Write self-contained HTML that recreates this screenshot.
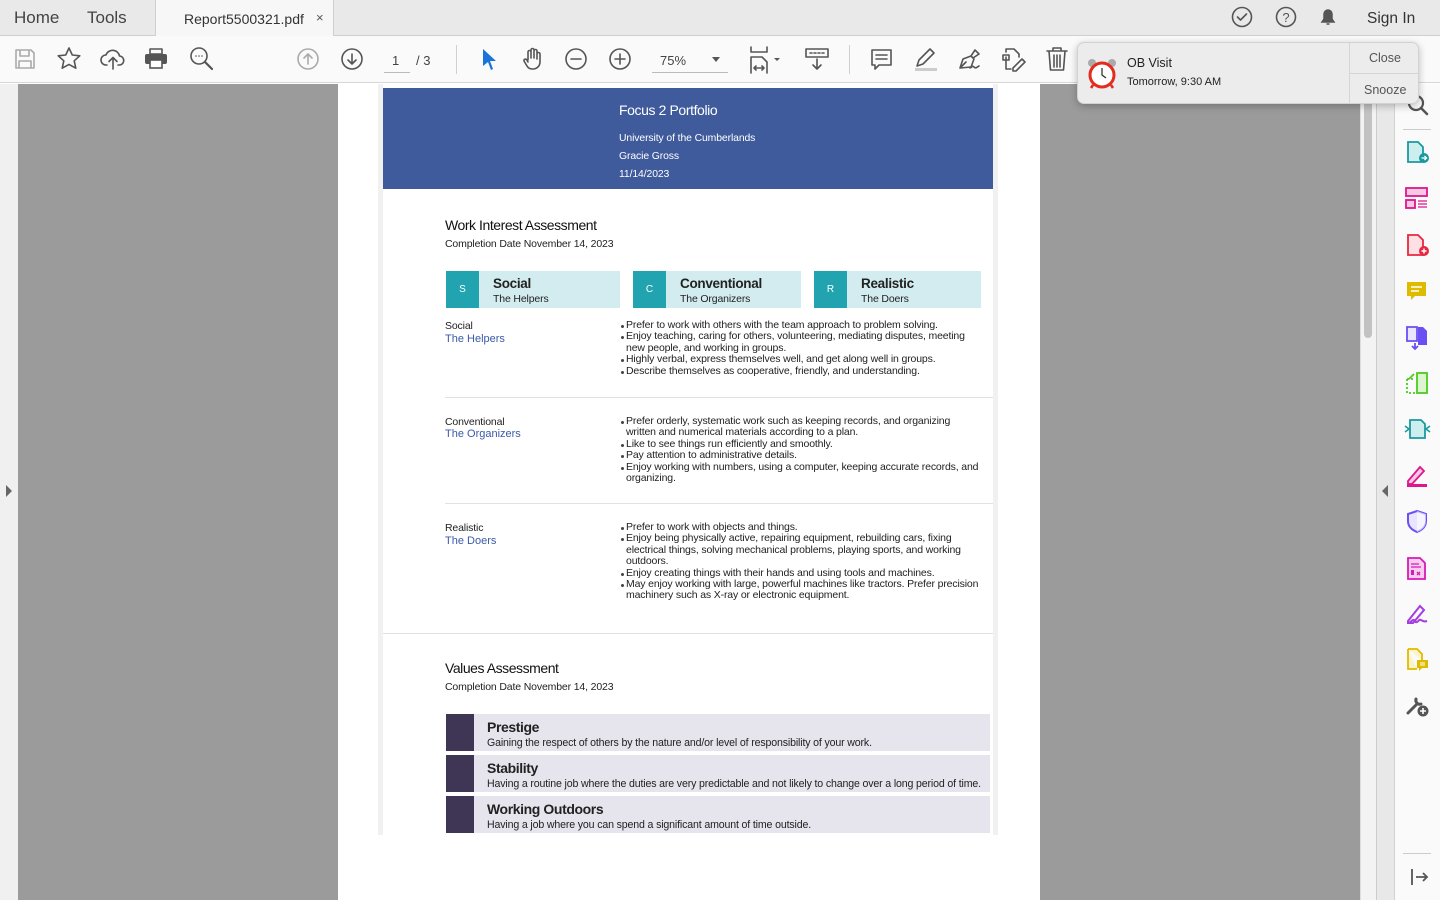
<!DOCTYPE html>
<html><head><meta charset="utf-8"><style>
*{margin:0;padding:0;box-sizing:border-box}
body{width:1440px;height:900px;overflow:hidden;font-family:"Liberation Sans",Arial,sans-serif;background:#fff;position:relative;color:#222}
.a{position:absolute}
.t{position:absolute;white-space:nowrap}
svg{position:absolute;overflow:visible}
.ic{fill:none;stroke:#555;stroke-width:1.6;stroke-linecap:round;stroke-linejoin:round}
.pg{font-size:10.5px;letter-spacing:-0.15px;color:#222}
.bl{font-size:10.5px;line-height:11.4px;letter-spacing:-0.15px;color:#222;white-space:nowrap}
.bl div{padding-left:6px;position:relative}
.bl div:before{content:"";position:absolute;left:1px;top:5px;width:3px;height:3px;background:#444;border-radius:50%}
.lnk{color:#3a5aa8;font-size:11px}
.card{position:absolute;height:37px;background:#d3ecef}
.card .sq{position:absolute;left:0;top:0;width:33px;height:37px;background:#22a4b0;color:#fff;font-size:10px;text-align:center;line-height:37px}
.card b{position:absolute;left:47px;top:5px;font-size:13.5px;letter-spacing:-0.3px}
.card span{position:absolute;left:47px;top:22px;font-size:10.5px;letter-spacing:-0.15px}
.val{position:absolute;left:446px;width:544px;height:37px;background:#e6e5ee}
.val i{position:absolute;left:0;top:0;width:28px;height:37px;background:#3f3656}
.val b{position:absolute;left:41px;top:5px;font-size:14px;letter-spacing:-0.4px;font-style:normal}
.val span{position:absolute;left:41px;top:23px;font-size:10.6px;letter-spacing:-0.15px}
</style></head><body>
<div class="a" style="left:0;top:0;width:1440px;height:36px;background:#e9e9e9;border-bottom:1px solid #cfcfcf"></div>
<div class="a" style="left:155px;top:0;width:179px;height:36px;background:#f7f7f7;border-left:1px solid #cfcfcf;border-right:1px solid #cfcfcf"></div>
<div class="t" style="left:14px;top:8px;font-size:17px;color:#444">Home</div>
<div class="t" style="left:87px;top:8px;font-size:17px;color:#444">Tools</div>
<div class="t" style="left:184px;top:11px;font-size:14px;color:#333">Report5500321.pdf</div>
<div class="t" style="left:316px;top:10px;font-size:13px;color:#555">×</div>
<svg width="24" height="24" style="left:1230px;top:5px"><circle cx="12" cy="12" r="9.5" class="ic"/><path d="M7.5 12l3 3 6-6" class="ic"/></svg>
<svg width="24" height="24" style="left:1274px;top:5px"><circle cx="12" cy="12" r="9.5" class="ic"/><text x="12" y="17" text-anchor="middle" font-size="13" fill="#555" font-family="Liberation Sans">?</text></svg>
<svg width="24" height="24" style="left:1316px;top:5px"><path d="M6 17h12l-2-3v-5a4 4 0 0 0-8 0v5z M10.5 19h3" fill="#555" stroke="#555" stroke-width="1.5"/></svg>
<div class="t" style="left:1367px;top:10px;font-size:15.5px;color:#333">Sign In</div>

<div class="a" style="left:0;top:36px;width:1440px;height:47px;background:#fafafa;border-bottom:1px solid #d6d6d6"></div>
<svg width="24" height="24" style="left:13px;top:47px"><path d="M3 3h15l3 3v15H3z M7 3v6h9V3 M6 21v-7h12v7" class="ic" style="stroke:#aaa"/></svg>
<svg width="26" height="26" style="left:56px;top:46px"><path d="M13 2l3.3 7 7.5.8-5.6 5 1.6 7.4L13 18.4l-6.8 3.8 1.6-7.4-5.6-5 7.5-.8z" class="ic"/></svg>
<svg width="26" height="26" style="left:100px;top:46px"><path d="M7 19H6a5 5 0 0 1 0-10 7 7 0 0 1 13.5 1A4.5 4.5 0 0 1 19 19h-1 M13 23V12 M9 15.5l4-4 4 4" class="ic"/></svg>
<svg width="26" height="26" style="left:143px;top:46px"><path d="M7 3h12v5H7z" class="ic"/><rect x="2" y="8" width="22" height="10" rx="2" fill="#555"/><rect x="7" y="14" width="12" height="8" fill="#fff" stroke="#555" stroke-width="1.6"/></svg>
<svg width="26" height="26" style="left:189px;top:46px"><circle cx="10" cy="10" r="8" class="ic"/><path d="M16 16l7 7" class="ic" style="stroke-width:2.2"/><circle cx="7" cy="10" r=".8" fill="#555"/><circle cx="10" cy="10" r=".8" fill="#555"/><circle cx="13" cy="10" r=".8" fill="#555"/></svg>
<svg width="24" height="24" style="left:296px;top:47px"><circle cx="12" cy="12" r="10" class="ic" style="stroke:#aaa"/><path d="M12 17V7 M8 11l4-4 4 4" class="ic" style="stroke:#aaa"/></svg>
<svg width="24" height="24" style="left:340px;top:47px"><circle cx="12" cy="12" r="10" class="ic"/><path d="M12 7v10 M8 13l4 4 4-4" class="ic"/></svg>
<div class="t" style="left:392px;top:53px;font-size:13px;color:#444">1</div>
<div class="a" style="left:384px;top:72px;width:26px;height:1px;background:#bbb"></div>
<div class="t" style="left:416px;top:53px;font-size:13px;color:#444">/ 3</div>
<div class="a" style="left:456px;top:45px;width:1px;height:29px;background:#d0d0d0"></div>
<svg width="20" height="24" style="left:480px;top:47px"><path d="M3 2l13 12h-6l3 8-2 1-3-8-5 4z" fill="#1a73d8"/></svg>
<svg width="26" height="26" style="left:520px;top:46px"><path d="M8 14V6a1.5 1.5 0 0 1 3 0v6V4a1.5 1.5 0 0 1 3 0v8V5a1.5 1.5 0 0 1 3 0v8V8a1.5 1.5 0 0 1 3 0v8a7 7 0 0 1-7 7h-1a6 6 0 0 1-5-3l-3-5a1.5 1.5 0 0 1 2.5-1.5L8 16" class="ic"/></svg>
<svg width="24" height="24" style="left:564px;top:47px"><circle cx="12" cy="12" r="10" class="ic"/><path d="M7 12h10" class="ic"/></svg>
<svg width="24" height="24" style="left:608px;top:47px"><circle cx="12" cy="12" r="10" class="ic"/><path d="M7 12h10 M12 7v10" class="ic"/></svg>
<div class="t" style="left:660px;top:53px;font-size:13px;color:#444">75%</div>
<div class="a" style="left:652px;top:72px;width:76px;height:1px;background:#bbb"></div>
<svg width="10" height="6" style="left:712px;top:57px"><path d="M0 0h8l-4 5z" fill="#555"/></svg>
<svg width="34" height="28" style="left:748px;top:45px"><path d="M3 2v5h16V2 M3 28V12h11l5 5v11 M6 23h10 M6 23l2-2M6 23l2 2M16 23l-2-2M16 23l-2 2" class="ic"/><path d="M26 13h6l-3 3z" fill="#555"/></svg>
<svg width="26" height="26" style="left:804px;top:46px"><rect x="2" y="3" width="22" height="8" class="ic"/><path d="M6 7h2M10 7h2M14 7h2M18 7h2 M13 13v10 M9 19l4 4 4-4" class="ic"/></svg>
<div class="a" style="left:849px;top:45px;width:1px;height:29px;background:#d0d0d0"></div>
<svg width="26" height="26" style="left:869px;top:47px"><path d="M3 3h19v15H10l-4 4v-4H3z M7 8h11 M7 12h11" class="ic"/></svg>
<svg width="26" height="26" style="left:912px;top:46px"><path d="M5 20l2-6L18 3l4 4-11 11z" class="ic"/><rect x="3" y="22" width="22" height="3" fill="#ccc"/></svg>
<svg width="26" height="26" style="left:956px;top:46px"><path d="M4 22l3-9 8-3 3 3-3 8z M4 22l6-6 M15 10l4-6 4 4-6 4 M14 22c2 0 2-3 4-1s3 0 5-1" class="ic"/></svg>
<svg width="26" height="26" style="left:1000px;top:46px"><path d="M6 6V3h8l5 5v3 M6 11v12h5 M3 9h6v5H3z M13 22l9-9 3 3-9 9h-3z" class="ic"/></svg>
<svg width="24" height="26" style="left:1045px;top:46px"><path d="M2 5h20 M8 5V2h8v3 M4 5l1.5 19h13L20 5 M9 9v12M12 9v12M15 9v12" class="ic"/></svg>

<div class="a" style="left:0;top:84px;width:18px;height:816px;background:#f0f0f0"></div>
<svg width="8" height="12" style="left:5px;top:485px"><path d="M1 0l6 6-6 6z" fill="#666"/></svg>
<div class="a" style="left:18px;top:84px;width:320px;height:816px;background:#9b9b9b"></div>
<div class="a" style="left:1040px;top:84px;width:320px;height:816px;background:#9b9b9b"></div>
<div class="a" style="left:338px;top:84px;width:702px;height:816px;background:#fff"></div>
<div class="a" style="left:1360px;top:84px;width:16px;height:816px;background:#f3f3f3;border-left:1px solid #ddd"></div>
<div class="a" style="left:1364px;top:90px;width:8px;height:248px;background:#c2c2c2;border-radius:4px"></div>
<div class="a" style="left:1376px;top:84px;width:19px;height:816px;background:#e8e8e8;border-left:1px solid #ccc;border-right:1px solid #d3d3d3"></div>
<svg width="8" height="12" style="left:1381px;top:485px"><path d="M7 0L1 6l6 6z" fill="#666"/></svg>
<div class="a" style="left:1395px;top:84px;width:45px;height:816px;background:#fafafa"></div>

<div class="a" style="left:378px;top:84px;width:620px;height:751px;background:#f1f1f1"></div>
<div class="a" style="left:383px;top:84px;width:610px;height:751px;background:#fff"></div>
<div class="a" style="left:383px;top:88px;width:610px;height:101px;background:#3f5b9c"></div>
<div class="t" style="left:619px;top:102px;font-size:14px;color:#fff;letter-spacing:-0.4px">Focus 2 Portfolio</div>
<div class="t" style="left:619px;top:133px;font-size:10.4px;color:#fff;letter-spacing:-0.1px">University of the Cumberlands</div>
<div class="t" style="left:619px;top:151px;font-size:10.4px;color:#fff;letter-spacing:-0.1px">Gracie Gross</div>
<div class="t" style="left:619px;top:169px;font-size:10.4px;color:#fff;letter-spacing:-0.1px">11/14/2023</div>

<div class="t" style="left:445px;top:217px;font-size:14px;letter-spacing:-0.45px;color:#111">Work Interest Assessment</div>
<div class="t pg" style="left:445px;top:238px">Completion Date November 14, 2023</div>

<div class="card" style="left:446px;top:271px;width:174px"><div class="sq">S</div><b>Social</b><span>The Helpers</span></div>
<div class="card" style="left:633px;top:271px;width:168px"><div class="sq">C</div><b>Conventional</b><span>The Organizers</span></div>
<div class="card" style="left:814px;top:271px;width:167px"><div class="sq">R</div><b>Realistic</b><span>The Doers</span></div>

<div class="t pg" style="left:445px;top:320px">Social</div>
<div class="t lnk" style="left:445px;top:333px">The Helpers</div>
<div class="a bl" style="left:620px;top:320px">
<div>Prefer to work with others with the team approach to problem solving.</div>
<div>Enjoy teaching, caring for others, volunteering, mediating disputes, meeting<br>new people, and working in groups.</div>
<div>Highly verbal, express themselves well, and get along well in groups.</div>
<div>Describe themselves as cooperative, friendly, and understanding.</div>
</div>
<div class="a" style="left:445px;top:397px;width:548px;height:1px;background:#e2e2e2"></div>

<div class="t pg" style="left:445px;top:416px">Conventional</div>
<div class="t lnk" style="left:445px;top:428px">The Organizers</div>
<div class="a bl" style="left:620px;top:416px">
<div>Prefer orderly, systematic work such as keeping records, and organizing<br>written and numerical materials according to a plan.</div>
<div>Like to see things run efficiently and smoothly.</div>
<div>Pay attention to administrative details.</div>
<div>Enjoy working with numbers, using a computer, keeping accurate records, and<br>organizing.</div>
</div>
<div class="a" style="left:445px;top:503px;width:548px;height:1px;background:#e2e2e2"></div>

<div class="t pg" style="left:445px;top:522px">Realistic</div>
<div class="t lnk" style="left:445px;top:535px">The Doers</div>
<div class="a bl" style="left:620px;top:522px">
<div>Prefer to work with objects and things.</div>
<div>Enjoy being physically active, repairing equipment, rebuilding cars, fixing<br>electrical things, solving mechanical problems, playing sports, and working<br>outdoors.</div>
<div>Enjoy creating things with their hands and using tools and machines.</div>
<div>May enjoy working with large, powerful machines like tractors. Prefer precision<br>machinery such as X-ray or electronic equipment.</div>
</div>
<div class="a" style="left:383px;top:633px;width:610px;height:1px;background:#e2e2e2"></div>

<div class="t" style="left:445px;top:660px;font-size:14px;letter-spacing:-0.45px;color:#111">Values Assessment</div>
<div class="t pg" style="left:445px;top:681px">Completion Date November 14, 2023</div>
<div class="val" style="top:714px"><i></i><b>Prestige</b><span>Gaining the respect of others by the nature and/or level of responsibility of your work.</span></div>
<div class="val" style="top:755px"><i></i><b>Stability</b><span>Having a routine job where the duties are very predictable and not likely to change over a long period of time.</span></div>
<div class="val" style="top:796px"><i></i><b>Working Outdoors</b><span>Having a job where you can spend a significant amount of time outside.</span></div>

<svg width="26" height="26" style="left:1405px;top:92px"><circle cx="11" cy="11" r="7" class="ic" style="stroke-width:2.2"/><path d="M16 16l6 6" class="ic" style="stroke-width:2.6"/></svg>
<div class="a" style="left:1403px;top:129px;width:28px;height:1px;background:#ccc"></div>
<svg width="26" height="26" style="left:1405px;top:140px"><path d="M3 2h10l5 5v15H3z" fill="#cdeeee" stroke="#1a9aa0" stroke-width="1.8"/><circle cx="19" cy="18" r="5" fill="#1a9aa0"/><path d="M16.5 18h5M19.5 16l2 2-2 2" stroke="#fff" stroke-width="1.3" fill="none"/></svg>
<svg width="26" height="26" style="left:1405px;top:187px"><rect x="1" y="1" width="21" height="8" fill="#f7c9e4" stroke="#e0168c" stroke-width="1.8"/><rect x="1" y="13" width="9" height="8" fill="#f7c9e4" stroke="#e0168c" stroke-width="1.8"/><path d="M13 14h9M13 17h9M13 20h9" stroke="#e0168c" stroke-width="1.3"/></svg>
<svg width="26" height="26" style="left:1405px;top:233px"><path d="M3 2h10l5 5v15H3z" fill="#fde0e4" stroke="#e8273f" stroke-width="1.8"/><circle cx="19" cy="18" r="5" fill="#e8273f"/><path d="M16.5 18h5M19 15.5v5" stroke="#fff" stroke-width="1.5"/></svg>
<svg width="26" height="26" style="left:1405px;top:280px"><path d="M2 2h19v14H10l-4 4v-4H2z" fill="#dfbb00"/><path d="M6 7h11M6 11h8" stroke="#fff" stroke-width="1.5"/></svg>
<svg width="26" height="26" style="left:1405px;top:325px"><path d="M2 2h10v14H2z" fill="#e9e4ff" stroke="#6a4ff2" stroke-width="1.8"/><path d="M13 2h5l4 4v14h-9z" fill="#6a4ff2"/><path d="M10 18v6M7 21l3 3 3-3" stroke="#6a4ff2" stroke-width="1.8" fill="none"/></svg>
<svg width="26" height="26" style="left:1405px;top:371px"><rect x="12" y="2" width="10" height="20" fill="#ddf5cf" stroke="#4ecb1e" stroke-width="1.8"/><path d="M2 8v14h8 M2 8h8" stroke="#4ecb1e" stroke-width="1.8" stroke-dasharray="2 2" fill="none"/><path d="M9 3L4 8" stroke="#4ecb1e" stroke-width="1.8"/></svg>
<svg width="26" height="26" style="left:1405px;top:417px"><path d="M5 3h11l4 4v14H5z" fill="#cdeeee" stroke="#1a9aa0" stroke-width="1.8"/><path d="M0 9l4 3-4 3M25 9l-4 3 4 3" stroke="#1a9aa0" stroke-width="1.6" fill="none"/></svg>
<svg width="26" height="26" style="left:1405px;top:463px"><path d="M3 18L15 4l4 4-12 13H3z" fill="#f7c9e4" stroke="#e0168c" stroke-width="1.8"/><rect x="2" y="21" width="20" height="3" fill="#e0168c"/></svg>
<svg width="26" height="26" style="left:1405px;top:509px"><path d="M12 2l9 3v7c0 6-4 9-9 11-5-2-9-5-9-11V5z" fill="#e9e4ff" stroke="#6a4ff2" stroke-width="2"/><path d="M12 2v21c5-2 9-5 9-11V5z" fill="#fff" opacity=".6"/></svg>
<svg width="26" height="26" style="left:1405px;top:556px"><path d="M3 2h12l5 5v16H3z" fill="#f8cdef" stroke="#d61bb6" stroke-width="1.8"/><path d="M6 8h8M6 11h10" stroke="#d61bb6" stroke-width="1.3"/><rect x="6" y="14" width="3" height="5" fill="#d61bb6"/><path d="M12 16l3 3M15 16l-3 3" stroke="#d61bb6" stroke-width="1.3"/></svg>
<svg width="26" height="26" style="left:1405px;top:601px"><path d="M3 20L15 5l4 4L8 22H3z M3 22c3 0 4-4 6-3s1 3 3 2 2-3 4-2 3 2 6 1" fill="none" stroke="#a33ee0" stroke-width="2"/></svg>
<svg width="26" height="26" style="left:1405px;top:647px"><path d="M3 2h9l5 5v6 M3 2v20h9" fill="#fdf3c8" stroke="#dfbb00" stroke-width="1.8"/><path d="M12 13h11v8h-6l-3 3v-3h-2z" fill="#dfbb00"/><path d="M15 16h5M15 18h5" stroke="#fff" stroke-width="1"/></svg>
<svg width="26" height="26" style="left:1405px;top:693px"><path d="M3 20l9-9 M11 6a4 4 0 0 0 5 5" stroke="#555" stroke-width="3" fill="none" stroke-linecap="round"/><circle cx="18" cy="18" r="5.5" fill="#555"/><path d="M15 18h6M18 15v6" stroke="#fff" stroke-width="1.6"/></svg>
<div class="a" style="left:1403px;top:853px;width:28px;height:1px;background:#ccc"></div>
<svg width="20" height="20" style="left:1410px;top:867px"><path d="M2 2v16 M6 10h11 M13 6l4 4-4 4" stroke="#555" stroke-width="1.8" fill="none"/></svg>

<div class="a" style="left:1077px;top:42px;width:342px;height:62px;background:#ececec;border:1px solid #d2d2d2;border-radius:7px;box-shadow:0 2px 8px rgba(0,0,0,.25)"></div>
<div class="a" style="left:1349px;top:43px;width:1px;height:60px;background:#d5d5d5"></div>
<div class="a" style="left:1350px;top:73px;width:68px;height:1px;background:#d5d5d5"></div>
<div class="t" style="left:1369px;top:51px;font-size:12.5px;color:#555">Close</div>
<div class="t" style="left:1364px;top:83px;font-size:12.5px;color:#555">Snooze</div>
<svg width="32" height="32" style="left:1086px;top:58px"><circle cx="6" cy="5" r="4" fill="#aaa"/><circle cx="26" cy="5" r="4" fill="#aaa"/><circle cx="16" cy="17" r="12" fill="#fff" stroke="#e32b20" stroke-width="3"/><path d="M16 10v7l4 3" stroke="#333" stroke-width="1.3" fill="none"/><path d="M7 27l-2 3M25 27l2 3" stroke="#e32b20" stroke-width="2.5"/></svg>
<div class="t" style="left:1127px;top:56px;font-size:12.5px;color:#222">OB Visit</div>
<div class="t" style="left:1127px;top:76px;font-size:11px;color:#222">Tomorrow, 9:30 AM</div>
</body></html>
